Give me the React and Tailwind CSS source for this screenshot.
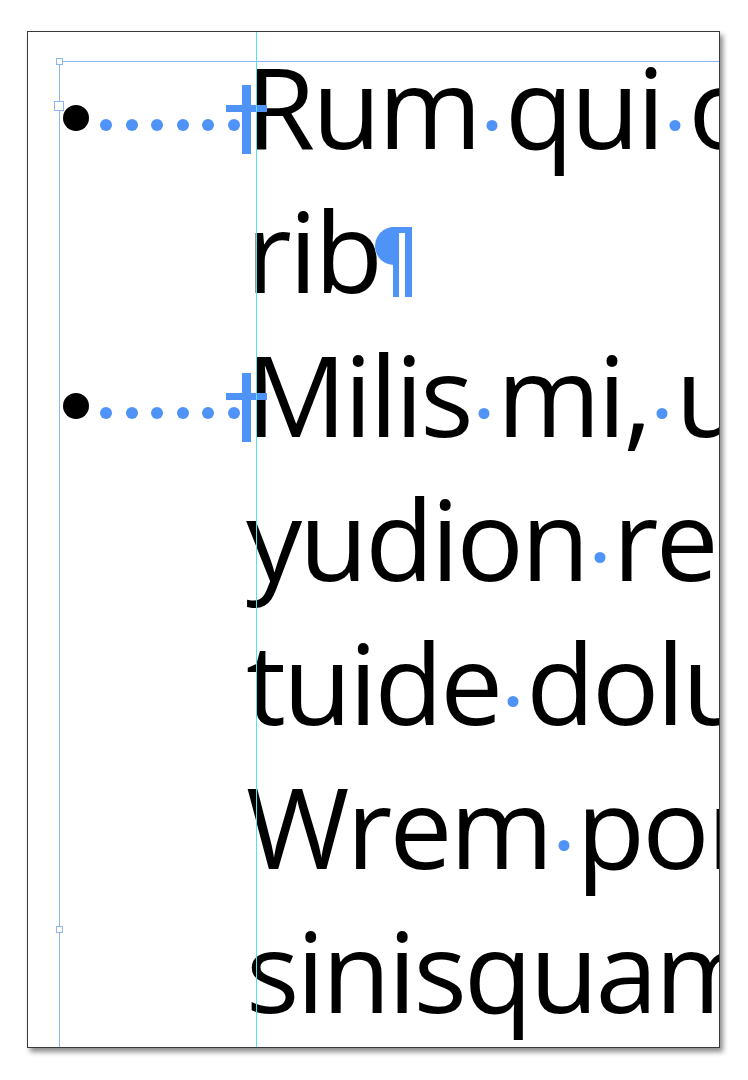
const BLUE = 'bg-[#4f93f6]'

function Space() {
  return (
    <span className="relative inline-block w-[26px] h-0">
      <span className={`absolute left-1/2 -translate-x-1/2 bottom-[18px] w-[11px] h-[11px] rounded-full ${BLUE}`} />
    </span>
  )
}

function Words({ words }) {
  return words.map((w, i) => (
    <span key={i}>
      {i > 0 && <Space />}
      {w}
    </span>
  ))
}

// bullet, tab leader and the "+" indent marker, hung left of the text
function Gutter() {
  return (
    <span className="inline-flex items-end w-[187px] -ml-[187px] pl-[4px] align-[18px]">
      <span className="shrink-0 w-[26px] h-[26px] rounded-full bg-black" />
      <span className="shrink-0 ml-[11px] flex gap-[13.6px]">
        {[0, 1, 2, 3, 4, 5].map(i => (
          <span key={i} className={`w-[12px] h-[12px] rounded-full ${BLUE}`} />
        ))}
      </span>
      <span className={`relative shrink-0 ml-[2px] -mb-[23px] w-[9px] h-[69px] ${BLUE}`}>
        <span className={`absolute -left-[16px] bottom-[42px] w-[41px] h-[7px] ${BLUE}`} />
      </span>
    </span>
  )
}

function Pilcrow() {
  return (
    <svg className="inline-block align-[-4px] -ml-[6px]" width="38" height="70" viewBox="0 0 38 70">
      <g fill="#4f93f6">
        <path d="M20 0 A19 19 0 0 0 20 38 Z" />
        <rect x="19" y="0" width="6" height="70" />
        <rect x="31" y="0" width="7" height="70" />
        <rect x="18" y="0" width="20" height="6" />
      </g>
    </svg>
  )
}

function Line({ children }) {
  return <div className="whitespace-nowrap">{children}</div>
}

export default function App() {
  return (
    <div className="min-h-[1080px] bg-white pt-[31px] pl-[27px]">
      <div className="relative w-[693px] h-[1017px] overflow-hidden border border-[#3a3a3a] bg-white shadow-[3px_4px_5px_rgba(0,0,0,0.45)]">
        <div
          className="pt-[2px] pl-[218px] text-[112px] leading-[144px] tracking-[-0.025em] text-black"
          style={{ fontFamily: '"Open Sans", "Noto Sans", sans-serif' }}
        >
          <div>
            <Line><Gutter /><Words words={['Rum', 'qui', 'odis']} /></Line>
            <Line>rib<Pilcrow /></Line>
          </div>
          <div>
            <Line><Gutter /><Words words={['Milis', 'mi,', 'ut']} /></Line>
            <Line><Words words={['yudion', 'rerum']} /></Line>
            <Line><Words words={['tuide', 'dolum']} /></Line>
            <Line><Words words={['Wrem', 'porum']} /></Line>
            <Line>sinisquam</Line>
          </div>
        </div>

        {/* frame edges, column guide and handles drawn over the page */}
        <div className="absolute left-[31px] right-0 top-[29px] h-px bg-[#8db5ee]" />
        <div className="absolute left-[31px] top-[29px] bottom-0 w-px bg-[#8db5ee]" />
        <div className="absolute left-[228px] top-0 bottom-0 w-px bg-[#55e2ec]" />
        <div className="absolute left-[28px] top-[26px] w-[7px] h-[7px] border border-[#8db5ee] bg-white" />
        <div className="absolute left-[26px] top-[69px] w-[10px] h-[10px] border border-[#8db5ee] bg-white" />
        <div className="absolute left-[28px] top-[894px] w-[7px] h-[7px] border border-[#8db5ee] bg-white" />
      </div>
    </div>
  )
}
